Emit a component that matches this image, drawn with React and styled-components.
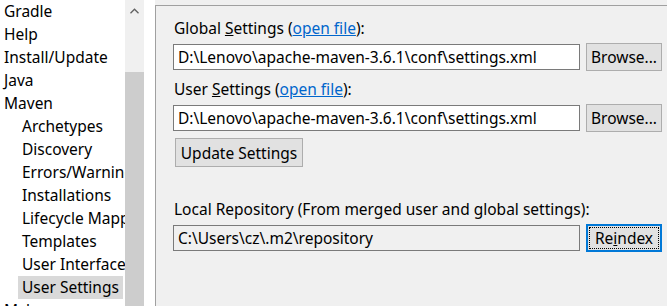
import React from 'react';
import styled, { createGlobalStyle } from 'styled-components';

const GlobalStyle = createGlobalStyle`
  html, body {
    margin: 0;
    padding: 0;
    background: #f0f0f0;
    overflow: hidden;
  }
  body {
    font-family: "Noto Sans", "Open Sans", sans-serif;
    font-size: 15.5px;
    color: #000;
  }
`;

const Window = styled.div`
  display: flex;
  width: 667px;
  height: 306px;
  overflow: hidden;
`;

const LeftPane = styled.div`
  width: 155px;
  flex: none;
  display: flex;
  background: #fff;
`;

const TreeList = styled.ul`
  list-style: none;
  margin: 0;
  padding: 0;
  width: 125px;
  overflow: hidden;
`;

const TreeItem = styled.li`
  height: 23px;
  line-height: 23px;
  white-space: nowrap;
  overflow: hidden;
  padding-left: ${p => (p.$child ? 22 : 4)}px;
  background: ${p => (p.$selected ? '#d9d9d9' : 'transparent')};
  margin-left: ${p => (p.$selected ? 18 : 0)}px;
  margin-right: ${p => (p.$selected ? 2 : 0)}px;
  ${p => p.$selected && 'padding-left: 4px;'}
`;

const ScrollTrack = styled.div`
  width: 19px;
  flex: none;
  background: #f0f0f0;
  display: flex;
  flex-direction: column;
`;

const ScrollArrow = styled.div`
  height: 22px;
  display: flex;
  align-items: center;
  justify-content: center;
`;

const ScrollThumb = styled.div`
  margin-top: 50px;
  flex: 1;
  background: #cdcdcd;
`;

const RightPane = styled.div`
  flex: 1;
  padding-top: 5px;
  display: flex;
`;

const Content = styled.div`
  flex: 1;
  border-top: 1px solid #a0a0a0;
  border-left: 1px solid #a0a0a0;
  padding: 12px 0 0 18px;
  display: flex;
  flex-direction: column;
`;

const Label = styled.div`
  height: 20px;
  line-height: 20px;
  white-space: nowrap;
  margin-top: ${p => p.$top || 0}px;
`;

const Link = styled.span`
  color: #0066cc;
  text-decoration: underline;
`;

const Key = styled.span`
  text-decoration: underline;
`;

const FieldRow = styled.div`
  display: flex;
  align-items: center;
  gap: 6px;
  margin-top: 5px;
  margin-left: -1px;
`;

const PathInput = styled.div`
  box-sizing: border-box;
  width: 407px;
  height: 26px;
  line-height: 24px;
  padding-left: 4px;
  border: 1px solid #7a7a7a;
  background: ${p => (p.$readonly ? '#f0f0f0' : '#fff')};
  white-space: nowrap;
  overflow: hidden;
`;

const Button = styled.div`
  box-sizing: border-box;
  width: ${p => p.$width || 76}px;
  height: ${p => p.$height || 28}px;
  display: flex;
  align-items: center;
  justify-content: center;
  background: #e1e1e1;
  border: 1px solid #adadad;
  white-space: nowrap;
  ${p =>
    p.$focused &&
    `
    border: 2px solid #0078d7;
    outline: 1px dotted #000;
    outline-offset: -4px;
  `}
`;

const UpdateButton = styled(Button)`
  margin-top: 6px;
  margin-left: 1px;
`;

const tree = [
  { label: 'Gradle' },
  { label: 'Help' },
  { label: 'Install/Update' },
  { label: 'Java' },
  { label: 'Maven' },
  { label: 'Archetypes', child: true },
  { label: 'Discovery', child: true },
  { label: 'Errors/Warnings', child: true },
  { label: 'Installations', child: true },
  { label: 'Lifecycle Mappings', child: true },
  { label: 'Templates', child: true },
  { label: 'User Interface', child: true },
  { label: 'User Settings', child: true, selected: true },
  { label: 'Mylyn' },
];

function App() {
  return (
    <>
      <GlobalStyle />
      <Window>
        <LeftPane>
          <TreeList>
            {tree.map(item => (
              <TreeItem key={item.label} $child={item.child} $selected={item.selected}>
                {item.label}
              </TreeItem>
            ))}
          </TreeList>
          <ScrollTrack>
            <ScrollArrow>
              <svg width="9" height="6" viewBox="0 0 9 6">
                <path d="M0.5 5.2 L4.5 1.2 L8.5 5.2" fill="none" stroke="#606060" strokeWidth="1.3" />
              </svg>
            </ScrollArrow>
            <ScrollThumb />
          </ScrollTrack>
        </LeftPane>
        <RightPane>
          <Content>
            <Label>
              Global <Key>S</Key>ettings (<Link>open file</Link>):
            </Label>
            <FieldRow>
              <PathInput>D:\Lenovo\apache-maven-3.6.1\conf\settings.xml</PathInput>
              <Button>Browse...</Button>
            </FieldRow>
            <Label $top={8}>
              User <Key>S</Key>ettings (<Link>open file</Link>):
            </Label>
            <FieldRow>
              <PathInput>D:\Lenovo\apache-maven-3.6.1\conf\settings.xml</PathInput>
              <Button>Browse...</Button>
            </FieldRow>
            <UpdateButton $width={128} $height={29}>Update Settings</UpdateButton>
            <Label $top={32}>Local Repository (From merged user and global settings):</Label>
            <FieldRow>
              <PathInput $readonly>C:\Users\cz\.m2\repository</PathInput>
              <Button $focused>
                Re<Key>i</Key>ndex
              </Button>
            </FieldRow>
          </Content>
        </RightPane>
      </Window>
    </>
  );
}

export default App;
